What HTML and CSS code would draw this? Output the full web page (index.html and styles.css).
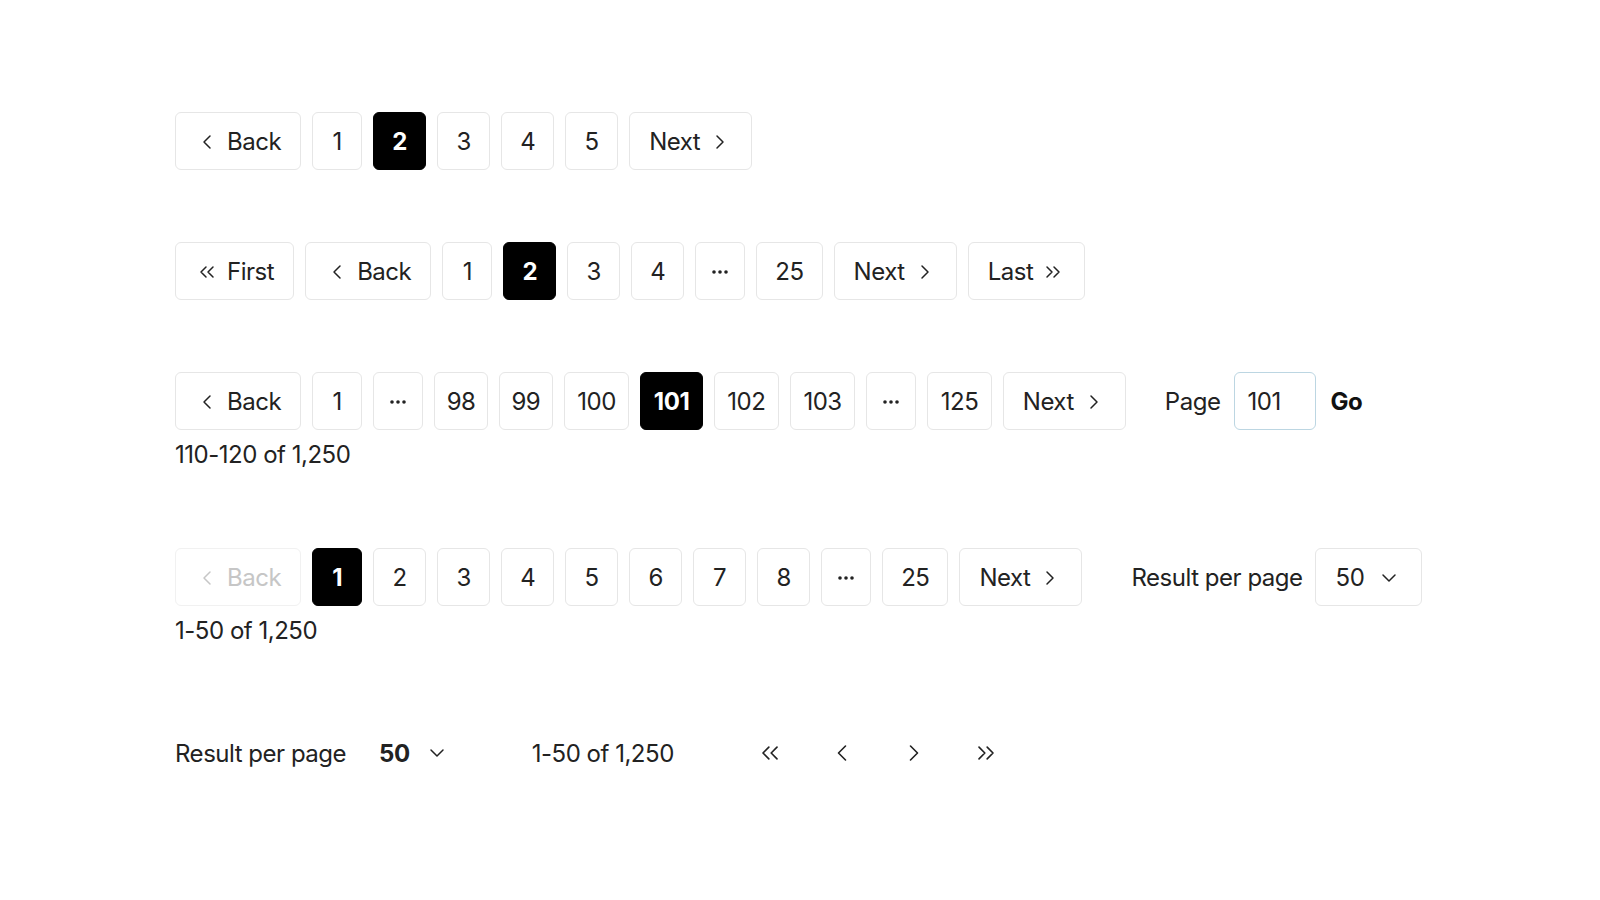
FILE: index.html
```html
<!DOCTYPE html>
<html lang="en">
<head>
<meta charset="utf-8">
<title>Pagination</title>
<link rel="stylesheet" href="styles.css">
</head>
<body>
<main class="page">

  <section class="section">
    <nav class="pager">
      <button class="btn"><svg class="ic" viewBox="0 0 24 24"><path d="M15 18l-6-6 6-6"/></svg><span>Back</span></button>
      <button class="btn num narrow">1</button>
      <button class="btn num active">2</button>
      <button class="btn num">3</button>
      <button class="btn num">4</button>
      <button class="btn num">5</button>
      <button class="btn"><span>Next</span><svg class="ic" viewBox="0 0 24 24"><path d="M9 18l6-6-6-6"/></svg></button>
    </nav>
  </section>

  <section class="section">
    <nav class="pager">
      <button class="btn"><svg class="ic" viewBox="0 0 24 24"><path d="M11 17l-5-5 5-5M18 17l-5-5 5-5"/></svg><span>First</span></button>
      <button class="btn"><svg class="ic" viewBox="0 0 24 24"><path d="M15 18l-6-6 6-6"/></svg><span>Back</span></button>
      <button class="btn num narrow">1</button>
      <button class="btn num active">2</button>
      <button class="btn num">3</button>
      <button class="btn num">4</button>
      <button class="btn num narrow"><svg class="dotsic" viewBox="0 0 16 4"><circle cx="2" cy="2" r="1.8"/><circle cx="8" cy="2" r="1.8"/><circle cx="14" cy="2" r="1.8"/></svg></button>
      <button class="btn num wide">25</button>
      <button class="btn"><span>Next</span><svg class="ic" viewBox="0 0 24 24"><path d="M9 18l6-6-6-6"/></svg></button>
      <button class="btn"><span>Last</span><svg class="ic" viewBox="0 0 24 24"><path d="M6 17l5-5-5-5M13 17l5-5-5-5"/></svg></button>
    </nav>
  </section>

  <section class="section">
    <div class="row">
      <nav class="pager">
        <button class="btn"><svg class="ic" viewBox="0 0 24 24"><path d="M15 18l-6-6 6-6"/></svg><span>Back</span></button>
        <button class="btn num narrow">1</button>
        <button class="btn num narrow"><svg class="dotsic" viewBox="0 0 16 4"><circle cx="2" cy="2" r="1.8"/><circle cx="8" cy="2" r="1.8"/><circle cx="14" cy="2" r="1.8"/></svg></button>
        <button class="btn num two">98</button>
        <button class="btn num two">99</button>
        <button class="btn num">100</button>
        <button class="btn num active">101</button>
        <button class="btn num">102</button>
        <button class="btn num">103</button>
        <button class="btn num narrow"><svg class="dotsic" viewBox="0 0 16 4"><circle cx="2" cy="2" r="1.8"/><circle cx="8" cy="2" r="1.8"/><circle cx="14" cy="2" r="1.8"/></svg></button>
        <button class="btn num">125</button>
        <button class="btn"><span>Next</span><svg class="ic" viewBox="0 0 24 24"><path d="M9 18l6-6-6-6"/></svg></button>
      </nav>
      <div class="jump">
        <span class="label">Page</span>
        <input class="page-input" type="text" value="101">
        <button class="go">Go</button>
      </div>
    </div>
    <p class="caption">110-120 of 1,250</p>
  </section>

  <section class="section">
    <div class="row">
      <nav class="pager">
        <button class="btn disabled"><svg class="ic" viewBox="0 0 24 24"><path d="M15 18l-6-6 6-6"/></svg><span>Back</span></button>
        <button class="btn num narrow active">1</button>
        <button class="btn num">2</button>
        <button class="btn num">3</button>
        <button class="btn num">4</button>
        <button class="btn num">5</button>
        <button class="btn num">6</button>
        <button class="btn num">7</button>
        <button class="btn num">8</button>
        <button class="btn num narrow"><svg class="dotsic" viewBox="0 0 16 4"><circle cx="2" cy="2" r="1.8"/><circle cx="8" cy="2" r="1.8"/><circle cx="14" cy="2" r="1.8"/></svg></button>
        <button class="btn num wide">25</button>
        <button class="btn"><span>Next</span><svg class="ic" viewBox="0 0 24 24"><path d="M9 18l6-6-6-6"/></svg></button>
      </nav>
      <div class="perpage">
        <span class="label">Result per page</span>
        <button class="select"><span>50</span><svg class="ic" viewBox="0 0 24 24"><path d="M6 9l6 6 6-6"/></svg></button>
      </div>
    </div>
    <p class="caption">1-50 of 1,250</p>
  </section>

  <section class="section">
    <div class="row compact">
      <span class="label">Result per page</span>
      <button class="plain-select"><span>50</span><svg class="ic" viewBox="0 0 24 24"><path d="M6 9l6 6 6-6"/></svg></button>
      <span class="range">1-50 of 1,250</span>
      <div class="icons">
        <button class="icbtn"><svg class="ic big" viewBox="0 0 24 24"><path d="M11 17l-5-5 5-5M18 17l-5-5 5-5"/></svg></button>
        <button class="icbtn"><svg class="ic big" viewBox="0 0 24 24"><path d="M15 18l-6-6 6-6"/></svg></button>
        <button class="icbtn"><svg class="ic big" viewBox="0 0 24 24"><path d="M9 18l6-6-6-6"/></svg></button>
        <button class="icbtn"><svg class="ic big" viewBox="0 0 24 24"><path d="M6 17l5-5-5-5M13 17l5-5-5-5"/></svg></button>
      </div>
    </div>
  </section>

</main>
</body>
</html>
```

FILE: styles.css
```css
* { box-sizing: border-box; }

html, body {
  margin: 0;
  background: #ffffff;
}

body {
  font-family: Inter, "Noto Sans", "Liberation Sans", sans-serif;
  font-size: 24px;
  letter-spacing: -0.02em;
  color: #222222;
}

.page {
  display: flex;
  flex-direction: column;
  gap: 72px;
  padding: 112px 0 0 175px;
}

.section {
  display: flex;
  flex-direction: column;
}

.row {
  display: flex;
  align-items: center;
}

.pager {
  display: flex;
  align-items: center;
  gap: 11px;
}

button {
  font: inherit;
  letter-spacing: inherit;
  color: inherit;
  background: none;
  border: 0;
  padding: 0;
  cursor: pointer;
}

.btn {
  height: 58px;
  display: inline-flex;
  align-items: center;
  justify-content: center;
  gap: 8px;
  padding: 1px 19px 0;
  border: 1px solid #e6e6e6;
  border-radius: 6px;
  background: #ffffff;
  line-height: 32px;
}

.btn.num {
  min-width: 53px;
  padding: 1px 12.5px 0;
}

.btn.num.narrow {
  min-width: 50px;
}

.btn.num.two {
  padding: 1px 11.5px 0;
}

.btn.num.wide {
  padding: 1px 18px 0;
}

.btn.active {
  background: #000000;
  border-color: #000000;
  color: #ffffff;
  font-weight: 700;
}

.btn.disabled {
  color: #c6c6c6;
  border-color: #f1f1f1;
}

.ic {
  width: 24px;
  height: 24px;
  fill: none;
  stroke: currentColor;
  stroke-width: 1.5;
  stroke-linecap: round;
  stroke-linejoin: round;
  flex: none;
}

.ic.big {
  width: 28px;
  height: 28px;
  stroke-width: 1.4;
}

.dotsic {
  width: 16px;
  height: 4px;
  fill: currentColor;
}

.jump {
  display: flex;
  align-items: center;
  gap: 14px;
  margin-left: 39px;
}

.page-input {
  width: 82px;
  height: 58px;
  border: 1px solid #bcd6e2;
  border-radius: 6px;
  padding: 1px 12px 0;
  font: inherit;
  letter-spacing: inherit;
  color: inherit;
  outline: none;
}

.go {
  font-weight: 700;
  color: #111111;
}

.perpage {
  display: flex;
  align-items: center;
  gap: 12px;
  margin-left: 49px;
}

.select {
  height: 58px;
  display: inline-flex;
  align-items: center;
  gap: 13px;
  padding: 1px 20px 0;
  border: 1px solid #e6e6e6;
  border-radius: 6px;
}

.caption {
  margin: 8px 0 5px;
  line-height: 33px;
}

.compact {
  height: 58px;
}

.plain-select {
  display: inline-flex;
  align-items: center;
  gap: 15px;
  margin-left: 33px;
  font-weight: 700;
}

.range {
  margin-left: 83px;
}

.icons {
  display: flex;
  align-items: center;
  gap: 44px;
  margin-left: 82px;
}

.icbtn {
  width: 28px;
  height: 28px;
  display: inline-flex;
}
```
